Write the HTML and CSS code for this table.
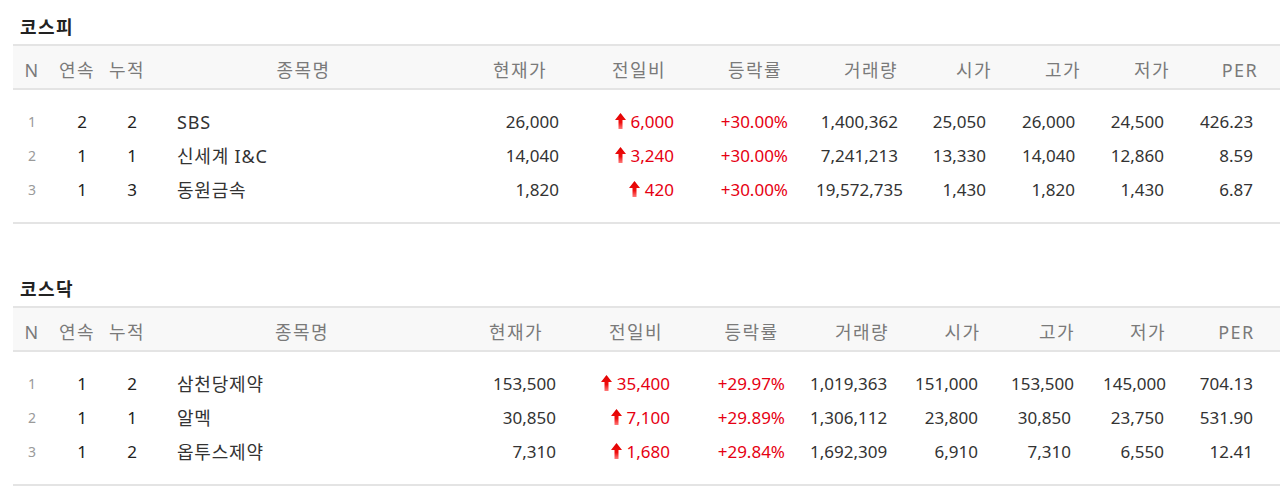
FILE: index.html
```html
<!DOCTYPE html>
<html lang="ko">
<head>
<meta charset="utf-8">
<title>상한가 종목</title>
<link rel="stylesheet" href="styles.css">
</head>
<body>
<svg class="defs" width="0" height="0" aria-hidden="true">
  <defs>
    <linearGradient id="upgrad" x1="0" y1="0" x2="0" y2="1">
      <stop offset="0" stop-color="#e00000"/>
      <stop offset="0.6" stop-color="#f01010"/>
      <stop offset="1" stop-color="#ff7a7a"/>
    </linearGradient>
    <symbol id="uparrow" viewBox="0 0 11 16">
      <polygon points="5.5,0 11,7 7.5,7 7.5,16 3.5,16 3.5,7 0,7" fill="url(#upgrad)"/>
    </symbol>
  </defs>
</svg>
<main class="page">
  <section class="market">
    <h2 class="market-title">코스피</h2>
    <table class="rank rank-kospi">
      <thead>
        <tr>
          <th>N</th><th>연속</th><th>누적</th><th>종목명</th><th>현재가</th><th>전일비</th><th>등락률</th><th>거래량</th><th>시가</th><th>고가</th><th>저가</th><th>PER</th>
        </tr>
      </thead>
      <tbody>
        <tr>
          <td class="no">1</td><td class="cnt">2</td><td class="cnt">2</td><td class="name">SBS</td><td>26,000</td>
          <td class="red"><svg class="arrow"><use href="#uparrow"/></svg>6,000</td><td class="red">+30.00%</td>
          <td>1,400,362</td><td>25,050</td><td>26,000</td><td>24,500</td><td>426.23</td>
        </tr>
        <tr>
          <td class="no">2</td><td class="cnt">1</td><td class="cnt">1</td><td class="name">신세계 I&amp;C</td><td>14,040</td>
          <td class="red"><svg class="arrow"><use href="#uparrow"/></svg>3,240</td><td class="red">+30.00%</td>
          <td>7,241,213</td><td>13,330</td><td>14,040</td><td>12,860</td><td>8.59</td>
        </tr>
        <tr>
          <td class="no">3</td><td class="cnt">1</td><td class="cnt">3</td><td class="name">동원금속</td><td>1,820</td>
          <td class="red"><svg class="arrow"><use href="#uparrow"/></svg>420</td><td class="red">+30.00%</td>
          <td>19,572,735</td><td>1,430</td><td>1,820</td><td>1,430</td><td>6.87</td>
        </tr>
      </tbody>
    </table>
  </section>

  <section class="market">
    <h2 class="market-title">코스닥</h2>
    <table class="rank rank-kosdaq">
      <thead>
        <tr>
          <th>N</th><th>연속</th><th>누적</th><th>종목명</th><th>현재가</th><th>전일비</th><th>등락률</th><th>거래량</th><th>시가</th><th>고가</th><th>저가</th><th>PER</th>
        </tr>
      </thead>
      <tbody>
        <tr>
          <td class="no">1</td><td class="cnt">1</td><td class="cnt">2</td><td class="name">삼천당제약</td><td>153,500</td>
          <td class="red"><svg class="arrow"><use href="#uparrow"/></svg>35,400</td><td class="red">+29.97%</td>
          <td>1,019,363</td><td>151,000</td><td>153,500</td><td>145,000</td><td>704.13</td>
        </tr>
        <tr>
          <td class="no">2</td><td class="cnt">1</td><td class="cnt">1</td><td class="name">알멕</td><td>30,850</td>
          <td class="red"><svg class="arrow"><use href="#uparrow"/></svg>7,100</td><td class="red">+29.89%</td>
          <td>1,306,112</td><td>23,800</td><td>30,850</td><td>23,750</td><td>531.90</td>
        </tr>
        <tr>
          <td class="no">3</td><td class="cnt">1</td><td class="cnt">2</td><td class="name">옵투스제약</td><td>7,310</td>
          <td class="red"><svg class="arrow"><use href="#uparrow"/></svg>1,680</td><td class="red">+29.84%</td>
          <td>1,692,309</td><td>6,910</td><td>7,310</td><td>6,550</td><td>12.41</td>
        </tr>
      </tbody>
    </table>
  </section>
</main>
</body>
</html>
```
FILE: styles.css
```css
html, body {
  margin: 0;
  padding: 0;
  background: #ffffff;
}

body {
  font-family: "Noto Sans", "Noto Sans CJK KR", sans-serif;
  color: #333333;
  overflow: hidden;
}

.defs {
  position: absolute;
  width: 0;
  height: 0;
}

.page {
  padding: 17px 0 0 13px;
}

.market + .market {
  margin-top: 55px;
}

.market-title {
  margin: 0 0 7px 7px;
  font-size: 18px;
  line-height: 20px;
  letter-spacing: 1.5px;
  font-weight: 700;
  color: #222222;
}

.rank {
  width: 1267px;
  table-layout: fixed;
  border-collapse: separate;
  border-spacing: 0;
  border-bottom: 2px solid #e4e4e4;
  font-size: 17px;
  line-height: 20px;
}

.rank th {
  height: 20px;
  padding: 14px 0 8px;
  background: #f8f8f8;
  border-top: 2px solid #e4e4e4;
  border-bottom: 2px solid #e4e4e4;
  font-size: 18px;
  letter-spacing: 1.5px;
  font-weight: 400;
  color: #7a7a7a;
  text-align: center;
  white-space: nowrap;
}

.rank td {
  padding: 7px 0;
  text-align: right;
  white-space: nowrap;
  color: #333333;
}

.rank tbody tr:first-child td {
  padding-top: 22px;
}

.rank tbody tr:last-child td {
  padding-bottom: 22px;
}

.rank td.no {
  text-align: center;
  font-size: 14px;
  color: #9a9a9a;
}

.rank td.cnt {
  text-align: center;
  padding-left: 10px;
  color: #222222;
}

.rank td.name {
  text-align: left;
  padding-left: 26px;
  font-size: 18px;
  letter-spacing: 0.8px;
}

.rank td.red {
  color: #e60012;
}

.arrow {
  width: 11px;
  height: 16px;
  margin-right: 5px;
  vertical-align: -1px;
}

/* 코스피 column widths and value insets */
.rank-kospi th:nth-child(1) { width: 38px; }
.rank-kospi th:nth-child(2) { width: 52px; }
.rank-kospi th:nth-child(3) { width: 48px; }
.rank-kospi th:nth-child(4) { width: 305px; }
.rank-kospi th:nth-child(5) { width: 128px; }
.rank-kospi th:nth-child(6) { width: 110px; }
.rank-kospi th:nth-child(7) { width: 122px; }
.rank-kospi th:nth-child(8) { width: 110px; }
.rank-kospi th:nth-child(9) { width: 96px; }
.rank-kospi th:nth-child(10) { width: 82px; }
.rank-kospi th:nth-child(11) { width: 96px; }
.rank-kospi th:nth-child(12) { width: 80px; }

.rank-kospi td:nth-child(5) { padding-right: 25px; }
.rank-kospi td:nth-child(6) { padding-right: 20px; }
.rank-kospi td:nth-child(7) { padding-right: 28px; }
.rank-kospi td:nth-child(8) { padding-right: 28px; }
.rank-kospi td:nth-child(9) { padding-right: 36px; }
.rank-kospi td:nth-child(10) { padding-right: 29px; }
.rank-kospi td:nth-child(11) { padding-right: 36px; }
.rank-kospi td:nth-child(12) { padding-right: 27px; }

/* 코스닥 column widths and value insets */
.rank-kosdaq th:nth-child(1) { width: 38px; }
.rank-kosdaq th:nth-child(2) { width: 52px; }
.rank-kosdaq th:nth-child(3) { width: 48px; }
.rank-kosdaq th:nth-child(4) { width: 302px; }
.rank-kosdaq th:nth-child(5) { width: 126px; }
.rank-kosdaq th:nth-child(6) { width: 114px; }
.rank-kosdaq th:nth-child(7) { width: 117px; }
.rank-kosdaq th:nth-child(8) { width: 104px; }
.rank-kosdaq th:nth-child(9) { width: 97px; }
.rank-kosdaq th:nth-child(10) { width: 92px; }
.rank-kosdaq th:nth-child(11) { width: 90px; }
.rank-kosdaq th:nth-child(12) { width: 87px; }

.rank-kosdaq td:nth-child(5) { padding-right: 23px; }
.rank-kosdaq td:nth-child(6) { padding-right: 23px; }
.rank-kosdaq td:nth-child(7) { padding-right: 25px; }
.rank-kosdaq td:nth-child(8) { padding-right: 30px; }
.rank-kosdaq td:nth-child(9) { padding-right: 33px; }
.rank-kosdaq td:nth-child(10) { padding-right: 32px; }
.rank-kosdaq td:nth-child(11) { padding-right: 29px; }
.rank-kosdaq td:nth-child(12) { padding-right: 27px; }
```
